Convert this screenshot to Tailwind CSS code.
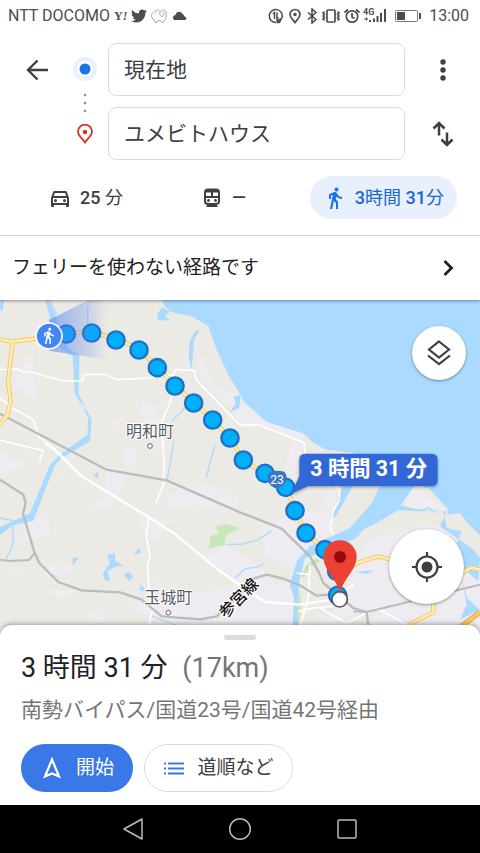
<!DOCTYPE html>
<html lang="ja">

<head>
  <meta charset="UTF-8" />
  <title>経路 - ユメビトハウス</title>
  <meta name="viewport" content="width=device-width, initial-scale=1.0" />
  <script src="https://cdn.jsdelivr.net/npm/@tailwindcss/browser@4"></script>
</head>

<body class="flex min-h-screen flex-col bg-white font-[Roboto,'Noto_Sans_CJK_JP',sans-serif] text-[#3c4043]">

  <!-- status bar -->
  <div class="flex h-8 items-center justify-between pr-[11px] pl-2 text-base text-[#4d4d4d]">
    <div class="flex items-center gap-1">
      <span>NTT DOCOMO</span>
      <span class="font-['Liberation_Serif',serif] text-xs font-bold">Y<i>!</i></span>
      <svg class="size-4" viewBox="0 0 24 24" fill="currentColor"><path d="M23.953 4.57a10 10 0 01-2.825.775 4.958 4.958 0 002.163-2.723c-.951.555-2.005.959-3.127 1.184a4.92 4.92 0 00-8.384 4.482C7.69 8.095 4.067 6.13 1.64 3.162a4.822 4.822 0 00-.666 2.475c0 1.71.87 3.213 2.188 4.096a4.904 4.904 0 01-2.228-.616v.06a4.923 4.923 0 003.946 4.827 4.996 4.996 0 01-2.212.085 4.936 4.936 0 004.604 3.417 9.867 9.867 0 01-6.102 2.105c-.39 0-.779-.023-1.17-.067a13.995 13.995 0 007.557 2.209c9.053 0 13.998-7.496 13.998-13.985 0-.21 0-.42-.015-.63A9.935 9.935 0 0024 4.59z" /></svg>
      <svg class="size-4" viewBox="0 0 16 16" fill="none" stroke="#aaa"><path d="M4 3C6 1 8 2 9 3.500C11 3 12 1 14 2.500C16 4 15 6 15.500 8C15 11 13 12 12.500 14.500H10.500L9.500 12.500H7L6 14.500H4L3.500 12C1 11 .5 9 .5 7C1 5 2 5 4 3ZM9 4C8 6 9 8 11 8.500C13 8 14 6 13 4M5 3.500V5M11.500 5V6" /></svg>
      <svg class="size-4" viewBox="0 0 16 16" fill="currentColor"><path d="M3 12A3 3 0 0 1 3 7.500L4.500 7C5 3 10 2.500 11.500 6C13 6.500 13 8 13.500 8.500C15.500 9 16 11 14.500 12Z" /></svg>
    </div>
    <div class="flex items-center gap-[3px]">
      <svg class="size-4" viewBox="0 0 16 16" fill="none" stroke="currentColor" stroke-width="1.5"><path d="M14 10A6.500 6.500 0 1 0 8 14.500M5 6L6.500 4.500V11M9 4.500V11L10.500 9.500" /><path d="M8 12.500L15 9L12 15L9 15.500Z" fill="currentColor" stroke="none" /></svg>
      <svg class="h-4 w-4" viewBox="0 0 16 16" fill="none" stroke="currentColor" stroke-width="1.700"><path d="M8 14.500C6 11.500 3 9.500 3 6.500A5 5 0 0 1 13 6.500C13 9.500 10 11.500 8 14.500Z" /><circle cx="8" cy="6.500" r="1.700" fill="currentColor" stroke="none" /></svg>
      <svg class="h-4 w-3" viewBox="0 0 12 16" fill="none" stroke="currentColor" stroke-width="1.600"><path d="M2 4.500L10 11.500L6 15V1L10 4.500L2 11.500" /></svg>
      <svg class="h-4 w-5" viewBox="0 0 20 16" fill="none" stroke="currentColor" stroke-width="1.700"><rect x="6" y="2" width="8" height="12" rx="1" /><path d="M3.500 3.500L2 5L3.500 6.500L2 8L3.500 9.500L2 11L3.500 12.500M16.500 3.500L18 5L16.500 6.500L18 8L16.500 9.500L18 11L16.500 12.500" /></svg>
      <svg class="size-4" viewBox="0 0 16 16" fill="none" stroke="currentColor" stroke-width="1.700"><circle cx="8" cy="8.500" r="5.700" /><path d="M8 5V9L10.500 10.500M.5 4.500L4 1.500M15.500 4.500L12 1.500" /></svg>
      <svg class="h-4 w-6" viewBox="0 0 24 16" fill="currentColor"><text x="0" y="7" font-size="9" font-weight="700">4G</text><path d="M1 10.500H3V9L5 11L3 13V11.500H1ZM6 12H8V14H6ZM10 10.500H12V14H10ZM13.500 8H15.500V14H13.500ZM17 5H19V14H17ZM21 1H23V14H21Z" /></svg>
      <svg class="mx-1 h-4 w-7" viewBox="0 0 28 16"><rect x="1.500" y="2.500" width="22" height="11" rx="1" fill="none" stroke="#777" /><path d="M3 4H11V12H3ZM25 5H27V11H25Z" fill="currentColor" /></svg>
      <span>13:00</span>
    </div>
  </div>

  <!-- route form -->
  <header class="border-b border-[#e4e5e7] pt-[11px] pb-4">
    <form class="grid grid-cols-[73px_24px_1fr_75px] grid-rows-[53px_53px] items-center gap-y-[11px]">
      <button type="button" aria-label="戻る" class="justify-self-center">
        <svg class="size-[22px]" viewBox="0 0 22 22" fill="none" stroke="currentColor" stroke-width="2.400"><path d="M22 11H2M11.500 1.500L2 11L11.500 20.500" /></svg>
      </button>
      <div class="row-span-2 flex h-full flex-col items-center justify-between pt-[14px] pb-4">
        <svg class="size-6" viewBox="0 0 24 24"><circle cx="12" cy="12" r="12" fill="#e8f0fe" /><circle cx="12" cy="12" r="8" fill="#fff" /><circle cx="12" cy="12" r="5.500" fill="#1a73e8" /></svg>
        <svg class="h-5 w-1" viewBox="0 0 4 20" fill="#8d9196"><circle cx="2" cy="2" r="1.300" /><circle cx="2" cy="10" r="1.300" /><circle cx="2" cy="18" r="1.300" /></svg>
        <svg class="h-5 w-4" viewBox="0 0 16 20" fill="none" stroke="#d93025" stroke-width="1.800"><path d="M8 18.500C6 15 1 12 1 7.500A7 6.800 0 0 1 15 7.500C15 12 10 15 8 18.500Z" /><circle cx="8" cy="8" r="2.200" fill="#d93025" stroke="none" /></svg>
      </div>
      <input type="text" aria-label="出発地" value="現在地" class="ml-[11px] h-full min-w-0 rounded-lg border border-[#dadce0] px-[15px] pb-1 text-[21px]" />
      <button type="button" aria-label="メニュー" class="justify-self-center">
        <svg class="h-6 w-6" viewBox="0 0 24 24" fill="currentColor"><circle cx="12" cy="4" r="2.700" /><circle cx="12" cy="12" r="2.700" /><circle cx="12" cy="20" r="2.700" /></svg>
      </button>
      <input type="text" aria-label="目的地" value="ユメビトハウス" class="col-start-3 ml-[11px] h-full min-w-0 rounded-lg border border-[#dadce0] px-[15px] pb-1 text-[21px]" />
      <button type="button" aria-label="入れ替え" class="justify-self-center">
        <svg class="h-[26px] w-[22px]" viewBox="0 0 22 26" fill="none" stroke="currentColor" stroke-width="2.500"><path d="M7 14.500V2M1.500 7.500L7 2L12.500 7.500M15 11.500V24M9.500 18.500L15 24L20.500 18.500" /></svg>
      </button>
    </form>
    <nav class="mt-4 flex items-center justify-between pr-[23px] pl-[35px] text-lg">
      <button class="flex h-[43px] items-center gap-2 px-[13px]">
        <svg class="size-6" viewBox="0 0 24 24" fill="currentColor"><path d="M18.920 6.010C18.720 5.420 18.160 5 17.500 5h-11c-.66 0-1.210.42-1.420 1.010L3 12v8c0 .55.45 1 1 1h1c.55 0 1-.45 1-1v-1h12v1c0 .55.45 1 1 1h1c.55 0 1-.45 1-1v-8l-2.080-5.990zM6.850 7h10.290l1.080 3.110H5.770L6.850 7zM19 17H5v-5h14v5z" /><circle cx="7.500" cy="14.500" r="1.500" /><circle cx="16.500" cy="14.500" r="1.500" /></svg>
        <span><span class="font-medium">25</span> 分</span>
      </button>
      <button class="flex h-[43px] items-center gap-2 px-[13px]">
        <svg class="size-6" viewBox="0 0 24 24" fill="none" stroke="currentColor" stroke-width="2"><path d="M8 3.500H16C18.500 3.500 19 5 19 6.500V15C19 17 18 18 16 18H8C6 18 5 17 5 15V6.500C5 5 5.500 3.500 8 3.500ZM5 11H19M12 5V11M5 5.500H19" /><path d="M8 18L6.500 20V21H17.500V20L16 18Z" fill="currentColor" stroke="none" /><circle cx="8.500" cy="14.500" r="1.400" fill="currentColor" stroke="none" /><circle cx="15.500" cy="14.500" r="1.400" fill="currentColor" stroke="none" /></svg>
        <span class="font-medium">—</span>
      </button>
      <button class="flex h-[43px] items-center gap-2 rounded-full bg-[#e8f0fe] px-[13px] text-[#1967d2]">
        <svg class="size-6" viewBox="0 0 24 24" fill="#1a73e8"><path d="M13.500 5.500c1.100 0 2-.9 2-2s-.9-2-2-2-2 .9-2 2 .9 2 2 2zM9.800 8.900L7 23h2.100l1.800-8 2.100 2v6h2v-7.500l-2.100-2 .6-3C14.800 12 16.800 13 19 13v-2c-1.900 0-3.500-1-4.300-2.400l-1-1.600c-.4-.6-1-1-1.700-1-.3 0-.5.1-.8.1L6 8.300V13h2V9.600l1.800-.7" /></svg>
        <span><span class="font-medium">3</span>時間 <span class="font-medium">31</span>分</span>
      </button>
    </nav>
  </header>

  <button class="z-10 flex h-16 items-center justify-between bg-white pr-5 pl-3 text-[19px] text-[#202124] shadow-[0_1px_3px_rgba(0,0,0,0.4)]">
    <span>フェリーを使わない経路です</span>
    <svg class="size-6" viewBox="0 0 24 24" fill="none" stroke="currentColor" stroke-width="2.800"><path d="M8.500 5L15.500 12L8.500 19" /></svg>
  </button>

  <!-- map -->
  <main class="relative min-h-80 flex-1 overflow-hidden bg-[#aadaff]">
    <svg class="absolute inset-0 h-full w-full" viewBox="0 6 1440 1002" preserveAspectRatio="xMidYMin slice" stroke-linejoin="round">
      <defs>
        <linearGradient id="beam" x1="147" y1="0" x2="325" y2="0" gradientUnits="userSpaceOnUse">
          <stop offset="0" stop-color="#4f7fee" stop-opacity=".85" />
          <stop offset=".6" stop-color="#4f7fee" stop-opacity=".4" />
          <stop offset="1" stop-color="#4f7fee" stop-opacity="0" />
        </linearGradient>
        <filter id="drop" x="-20%" y="-20%" width="140%" height="150%"><feDropShadow dx="0" dy="4" stdDeviation="5" flood-opacity=".35" /></filter>
        <g id="highways">
          <path d="M0 125L38 131L120 120L199 106L275 102L348 122L417 152L472 209L525 262L581 313L638 364L690 420L730 486L795 526L857 568L885 638L918 705L975 755L1010 820" />
          <path d="M38 131L24 250L32 310L22 350L0 380" />
          <path d="M1040 815L1080 792L1135 775L1200 792L1390 822L1415 809L1440 815" />
          <path d="M1225 985L1240 973L1300 943V915" />
        </g>
      </defs>

      <!-- land -->
      <path fill="#ebeae4" d="M0 6H485L497 28L520 44L575 55L625 85L652 160L690 240L722 290L745 335L800 372L912 408L940 435L980 455L1070 466L1200 550L1285 570L1343 632V650L1380 645L1400 672L1440 712V1008H0Z" />
      <g fill="#eeecf0">
        <path d="M98 160L104 308L35 262ZM428 296L470 330L475 400L518 455L462 465L460 400L424 380ZM603 170L650 270L712 290L700 345L585 218ZM700 340L730 310L800 372L912 408V440L780 385L720 390ZM876 430L912 442L880 520L845 540ZM365 445L412 455L402 520L374 500ZM318 505L388 525L378 550L328 633L262 631L315 590ZM180 520L194 513L165 570ZM510 598L545 565L620 560L720 600L700 650L600 624L500 630ZM405 642L515 668L450 735ZM90 670L145 658L152 710L50 736ZM605 780L680 745L760 790L820 850L900 860L890 985H500L420 940L380 920L440 900L480 840L500 900L620 880L715 855L610 790ZM20 820L72 810L28 838ZM170 790L226 816L180 829L128 828ZM150 878L228 875L190 912ZM270 945L300 940L320 975L268 980ZM0 455L40 480L70 500L0 540ZM360 360L380 355L350 400L330 390Z" />
        <path d="M780 700L870 650L900 720L960 780L900 830L800 770ZM1050 800L1130 700L1240 660L1320 690L1440 780V1000H930L1040 900ZM950 590L1010 570L1000 700L960 730L890 660ZM1200 600L1250 567L1340 640L1240 635Z" />
      </g>
      <path fill="#ebeae4" d="M1070 690L1170 650L1280 660L1240 700L1080 720ZM930 580L980 590L960 640L900 640ZM1100 600L1150 580L1110 640L1060 660ZM1040 955L1140 930L1100 975L1060 985Z" />

      <!-- water -->
      <g fill="#aadaff">
        <path d="M485 28L510 40L495 52L510 68L475 66L471 50ZM0 6H12L8 40L0 34ZM722 290L718 330L690 342L708 315L700 298ZM625 85L600 95L582 125L575 215L566 180L569 130L585 100Z" />
        <path d="M112 6L150 65L180 150L218 175L224 285L265 360L262 410L180 470L150 500L90 645L0 688V712L38 682L100 668L165 500L185 480L270 430L275 365L236 288L238 172L205 150L175 90L165 45L145 6H135L155 75Z" />
        <path d="M1140 560L1120 610L1050 690L930 745L890 790L870 860L882 900L878 985H895L898 850L915 780L1000 750L1070 720L1110 670L1200 635L1330 640L1340 690L1385 700L1350 780L1400 820L1435 850L1440 780L1415 750L1320 685L1340 640L1240 632L1200 622L1245 560Z" />
        <path d="M1140 560H1245L1190 640L1120 680L1080 700ZM1030 560H1060L1010 650L990 670ZM1385 840L1400 900L1440 935L1380 965L1400 920Z" />
        <path d="M322 770L345 766L345 788L370 804L345 806L322 820L330 847L316 850L308 828L330 795ZM385 820L401 838L386 848L372 832ZM218 778L235 780L218 803ZM402 768L418 748L423 766ZM422 858L440 882L418 876ZM280 533L295 520L293 541ZM1068 822L1122 817L1100 828Z" />
      </g>
      <g fill="none" stroke="#aadaff" stroke-width="4">
        <path d="M263 20V105M515 370L560 325M522 430L500 552M645 440L618 540M680 740L730 738L775 725L815 698M705 840L735 812L770 808L795 795M38 680L40 735L18 785M0 660L40 668M450 952L535 984M150 6L170 50" />
        <path d="M1200 635L1270 638L1285 628L1305 645" />
      </g>
      <path fill="#ebeae4" d="M237 312L255 325L256 340Z" />
      <path fill="#c5e8b7" d="M648 684L680 678L718 691L678 710L674 740L625 752L632 715L656 706ZM950 780L960 790L930 810L910 842L905 830L920 800ZM895 870L905 920L898 965L890 960Z" />

      <!-- local roads -->
      <g fill="none" stroke="#fff" stroke-width="5">
        <path d="M0 215L50 213L70 222H95L190 249H245L256 229H315L350 245L445 240L485 232H520L527 214L583 218L588 245L720 382L775 380L912 434L916 470" />
        <path d="M515 290L512 310L485 370L492 500L490 560L468 615M0 427L130 458L118 495M0 300L40 332L100 365L115 415L155 445L205 492M447 658L438 712L450 770L442 805L450 905L460 925L445 985" />
        <path d="M135 435L160 452L245 535L447 658L530 712L660 820L795 912L900 920L1000 905L1060 860" stroke-width="7" />
        <path d="M1000 560L1018 575V605L1000 640L990 690L1000 710M930 800L925 900L900 985M930 830L890 825M960 930L1040 975L1130 930L1220 980M895 940L940 930L1000 925" />
      </g>

      <!-- railways -->
      <g fill="none" stroke="#b9bcbf" stroke-width="7">
        <path d="M0 347L320 515L500 547L720 643L845 692L930 775L955 820L970 855L1060 930L1100 942L1105 985" />
        <path d="M0 545L70 590L77 615L69 647L103 762L118 795L175 852L245 877L360 883L425 905L485 955L600 964L650 955L720 890L760 842L800 830L850 842L900 862L950 893L985 890" />
        <path d="M0 785L25 789L88 786L103 765M1060 940L1100 942L1240 908L1440 860" stroke-width="6" />
      </g>

      <use href="#highways" fill="none" stroke="#eec66d" stroke-width="13" />
      <use href="#highways" fill="none" stroke="#ffeeaa" stroke-width="8" />
      <path d="M1365 1000L1440 942" fill="none" stroke="#e8a948" stroke-width="16" />
      <path d="M1365 1000L1440 942" fill="none" stroke="#fbc766" stroke-width="10" />

      <!-- route -->
      <g fill="#00b0ff" stroke="#1f6fc5" stroke-width="7">
        <circle cx="199" cy="108" r="26" /><circle cx="275" cy="105" r="26" /><circle cx="348" cy="126" r="26" />
        <circle cx="417" cy="156" r="26" /><circle cx="472" cy="209" r="26" /><circle cx="525" cy="264" r="26" />
        <circle cx="581" cy="315" r="26" /><circle cx="638" cy="366" r="26" /><circle cx="690" cy="420" r="26" />
        <circle cx="730" cy="486" r="26" /><circle cx="795" cy="526" r="26" /><circle cx="857" cy="568" r="26" />
        <circle cx="885" cy="638" r="26" /><circle cx="918" cy="705" r="26" /><circle cx="975" cy="755" r="26" />
        <circle cx="1010" cy="820" r="26" /><circle cx="1013" cy="892" r="26" />
      </g>
      <path d="M147 66L265 6H330V187L147 158Z" fill="url(#beam)" opacity=".65" />
      <circle cx="147" cy="114" r="39" fill="#4285f4" stroke="#fff" stroke-width="5" />
      <path transform="translate(119 86) scale(2.250)" fill="#fff" d="M13.500 5.500c1.100 0 2-.9 2-2s-.9-2-2-2-2 .9-2 2 .9 2 2 2zM9.800 8.900L7 23h2.100l1.800-8 2.100 2v6h2v-7.500l-2.100-2 .6-3C14.800 12 16.800 13 19 13v-2c-1.900 0-3.500-1-4.300-2.400l-1-1.600c-.4-.6-1-1-1.700-1-.3 0-.5.1-.8.1L6 8.300V13h2V9.600l1.800-.7" />

      <!-- road number -->
      <path d="M810 521Q831 515 853 521Q863 532 859 549Q852 565 831 573Q810 565 803 549Q799 532 810 521Z" fill="#3b78c3" />
      <text x="831" y="558" font-size="36" text-anchor="middle" fill="#fff">23</text>

      <!-- place names -->
      <g font-size="48" text-anchor="middle" fill="#565c63" stroke="#fff" stroke-width="6" paint-order="stroke">
        <text x="450" y="416">明和町</text>
        <text x="505" y="916">玉城町</text>
        <text transform="translate(728 912) rotate(-45)" font-size="48" font-weight="500" fill="#111">参宮線</text>
      </g>
      <g fill="#fff" stroke="#5f6368" stroke-width="3"><circle cx="450" cy="444" r="7" /><circle cx="505" cy="944" r="7" /></g>

      <!-- travel time callout -->
      <g filter="url(#drop)">
        <path d="M916 467H1295Q1313 467 1313 485V546Q1313 564 1295 564H925L873 588L898 535V485Q898 467 916 467Z" fill="#3367d6" />
      </g>
      <text x="1106" y="533" font-size="64" font-weight="700" text-anchor="middle" fill="#fff">3 時間 31 分</text>

      <!-- destination -->
      <circle cx="1019" cy="904" r="23" fill="#fff" stroke="#555" stroke-width="5" />
      <path d="M1020 890C1015 845 971 820 970 777A50 50 0 0 1 1070 777C1069 820 1025 845 1020 890Z" fill="#ea4335" />
      <circle cx="1020" cy="777" r="18" fill="#960a0a" />
    </svg>

    <button aria-label="レイヤ" class="absolute top-[26px] right-[14px] flex size-[54px] items-center justify-center rounded-full bg-white shadow-[0_1px_3px_rgba(0,0,0,0.4)]">
      <svg class="size-[26px]" viewBox="0 0 26 26" fill="none" stroke="currentColor" stroke-width="2.200"><path d="M13 1.500L23 9.500L13 17.500L3 9.500ZM2 15.500L13 24L24 15.500" /></svg>
    </button>
    <button aria-label="現在地を表示" class="absolute right-4 bottom-[29px] flex size-[75px] items-center justify-center rounded-full bg-white shadow-[0_1px_3px_rgba(0,0,0,0.4)]">
      <svg class="size-[30px]" viewBox="0 0 30 30" fill="none" stroke="currentColor" stroke-width="2.200"><circle cx="15" cy="15" r="10.500" /><circle cx="15" cy="15" r="5.500" fill="currentColor" stroke="none" /><path d="M15 0V5M15 25V30M0 15H5M25 15H30" /></svg>
    </button>
  </main>

  <!-- summary sheet -->
  <section class="relative -mt-2 rounded-t-xl bg-white px-[21px] pt-[10px] pb-[13px] shadow-[0_-1px_5px_rgba(0,0,0,0.35)]">
    <div class="mx-auto h-[5px] w-8 rounded-full bg-[#dadce0]"></div>
    <h1 class="mt-2 text-[27px] leading-10 text-[#202124]">3 時間 31 分 <span class="ml-2 text-[#757575]">(17km)</span></h1>
    <p class="mt-1 text-[21px] leading-9 text-[#757575]">南勢バイパス/国道23号/国道42号経由</p>
    <div class="mt-4 flex gap-[11px] text-[19px]">
      <button class="flex h-12 w-28 items-center justify-center gap-3 rounded-full bg-[#3b78e7] text-white">
        <svg class="size-6" viewBox="0 0 24 24" fill="none" stroke="currentColor" stroke-width="2.200"><path d="M12 3.500L19 20.500L12 17.500L5 20.500Z" /></svg>
        <span>開始</span>
      </button>
      <button class="flex h-12 w-[149px] items-center justify-center gap-3 rounded-full border border-[#dadce0]">
        <svg class="h-6 w-[22px]" viewBox="0 0 22 24" fill="none" stroke="#3b78e7" stroke-width="2.200"><path d="M5 7.500H21M5 12.500H21M5 17.500H21M1 7.500H3M1 12.500H3M1 17.500H3" /></svg>
        <span>道順など</span>
      </button>
    </div>
  </section>

  <!-- system navigation -->
  <footer class="grid h-12 grid-cols-3 place-items-center bg-black px-20">
    <button aria-label="戻る"><svg class="size-6" viewBox="0 0 24 24" fill="none" stroke="#bbb" stroke-width="1.500" stroke-linejoin="round"><path d="M3 12L21 2V22Z" /></svg></button>
    <button aria-label="ホーム"><svg class="size-6" viewBox="0 0 24 24" fill="none" stroke="#bbb" stroke-width="1.500"><circle cx="12" cy="12" r="10.300" /></svg></button>
    <button aria-label="履歴"><svg class="size-6" viewBox="0 0 24 24" fill="none" stroke="#bbb" stroke-width="1.500"><rect x="3" y="3" width="18" height="18" rx="1" /></svg></button>
  </footer>
</body>

</html>
